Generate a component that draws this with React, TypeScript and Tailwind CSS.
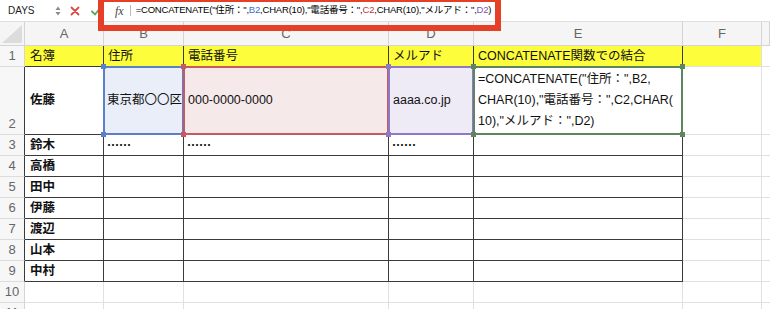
import React from "react";

const cols = ["A", "B", "C", "D", "E", "F", ""];
const names = ["鈴木", "高橋", "田中", "伊藤", "渡辺", "山本", "中村"];
const dark = "border-[#3a3a3a]";
const light = "border-[#e0e0e0]";

function Sel({ color, fill }: { color: string; fill?: string }) {
  return (
    <div className={`absolute -left-px -top-px -right-px -bottom-px border-2 ${color}`}>
      <span className={`absolute -left-[4px] -top-[4px] w-[5px] h-[5px] ${fill}`} />
      <span className={`absolute -right-[4px] -top-[4px] w-[5px] h-[5px] ${fill}`} />
      <span className={`absolute -left-[4px] -bottom-[4px] w-[5px] h-[5px] ${fill}`} />
      <span className={`absolute -right-[4px] -bottom-[4px] w-[5px] h-[5px] ${fill}`} />
    </div>
  );
}

function RowNum({ n, edge, bottom }: { n: number; edge?: boolean; bottom?: boolean }) {
  return (
    <div
      className={`bg-[#f7f7f7] border-b border-[#dcdcdc] border-r ${edge ? "border-r-[#3a3a3a]" : "border-r-[#d4d4d4]"} flex justify-center text-[13px] text-[#666] ${bottom ? "items-end pb-[1px]" : "items-center"}`}
    >
      {n}
    </div>
  );
}

export default function App() {
  return (
    <div className="w-[770px] h-[309px] overflow-hidden bg-white relative font-['Liberation_Sans','Noto_Sans_CJK_JP',sans-serif] text-[#111]">
      {/* toolbar + formula bar */}
      <div className="h-[22px] flex items-center bg-white border-b border-[#dedede]">
        <div className="ml-[4px] w-[58px] h-[17px] flex items-center justify-between pl-[4px] pr-[1px] bg-white">
          <span className="text-[10px] text-[#222]">DAYS</span>
          <svg width="6" height="10" viewBox="0 0 6 10">
            <polygon points="3,0.5 5.5,4 0.5,4" fill="#8a8a8a" />
            <polygon points="0.5,6 5.5,6 3,9.5" fill="#8a8a8a" />
          </svg>
        </div>
        <svg className="ml-[8px]" width="10" height="10" viewBox="0 0 10 10">
          <path d="M1.5 1.5 L8.5 8.5 M8.5 1.5 L1.5 8.5" stroke="#d84a43" strokeWidth="1.8" strokeLinecap="round" />
        </svg>
        <svg className="ml-[11px]" width="10" height="10" viewBox="0 0 10 10">
          <path d="M1 5.5 L4 8.5 L9.5 1.5" stroke="#5aa65c" strokeWidth="1.8" fill="none" strokeLinecap="round" />
        </svg>
        <div className="ml-[14px] flex items-center h-full">
          <span className="font-['Liberation_Serif',serif] italic text-[12px] text-[#444]">fx</span>
          <span className="ml-[6px] w-px h-[11px] bg-[#bbb]" />
          <span className="ml-[5px] text-[9.5px] text-[#000] whitespace-nowrap tracking-[-0.2px]">
            =CONCATENATE("住所：",<span className="text-[#3b6fc4]">B2</span>,CHAR(10),"電話番号：",
            <span className="text-[#c8333f]">C2</span>,CHAR(10),"メルアド：",<span className="text-[#7d55b8]">D2</span>)
          </span>
        </div>
      </div>

      {/* red annotation frame */}
      <div className="absolute left-[98px] top-[-4px] w-[403px] h-[35px] border-[6px] border-[#e63f28] pointer-events-none z-10" />

      {/* sheet */}
      <div className="grid grid-cols-[25px_79px_80px_205px_85px_209px_79px_1fr] grid-rows-[24px_21px_68px_repeat(9,21px)] text-[12.5px]">
        {/* column headers */}
        <div className="bg-[#f5f5f5] border-r border-b border-[#d4d4d4] relative">
          <svg className="absolute right-[2px] bottom-[2px]" width="20" height="18" viewBox="0 0 20 18">
            <polygon points="20,0 20,18 0,18" fill="#dcdcdc" />
          </svg>
        </div>
        {cols.map((c, i) => (
          <div
            key={i}
            className="bg-[#f5f5f5] border-r border-b border-[#d4d4d4] flex items-center justify-center text-[13px] text-[#666]"
          >
            {c}
          </div>
        ))}

        {/* row 1 */}
        <RowNum n={1} />
        <div className={`bg-[#fdfd3c] border-r border-b ${dark} flex items-center pl-[5px]`}>名簿</div>
        <div className={`bg-[#fdfd3c] border-r border-b ${dark} flex items-center pl-[4px]`}>住所</div>
        <div className={`bg-[#fdfd3c] border-r border-b ${dark} flex items-center pl-[4px]`}>電話番号</div>
        <div className={`bg-[#fdfd3c] border-r border-b ${dark} flex items-center pl-[4px]`}>メルアド</div>
        <div className={`bg-[#fdfd3c] border-r border-b ${dark} flex items-center pl-[4px]`}>CONCATENATE関数での結合</div>
        <div className={`bg-[#fdfd3c] border-r border-b ${light}`} />
        <div className={`border-b ${light}`} />

        {/* row 2 */}
        <RowNum n={2} edge bottom />
        <div className={`border-r border-b ${dark} flex items-center pl-[5px] font-bold`}>佐藤</div>
        <div className={`relative bg-[#e9eef8] border-r border-b ${dark} flex items-center pl-[3px] whitespace-nowrap`}>
          東京都〇〇区
          <Sel color="border-[#5a80c8]" fill="bg-[#5a80c8]" />
        </div>
        <div className={`relative bg-[#f6e9ea] border-r border-b ${dark} flex items-center pl-[4px]`}>
          000-0000-0000
          <Sel color="border-[#c55a63]" fill="bg-[#c55a63]" />
        </div>
        <div className={`relative bg-[#efebf6] border-r border-b ${dark} flex items-center pl-[4px]`}>
          aaaa.co.jp
          <Sel color="border-[#9079c4]" fill="bg-[#9079c4]" />
        </div>
        <div className={`relative border-r border-b ${dark} flex items-center pl-[4px] leading-[21px] whitespace-nowrap`}>
          <div>
            =CONCATENATE("住所：",B2,
            <br />
            CHAR(10),"電話番号：",C2,CHAR(
            <br />
            10),"メルアド：",D2)
          </div>
          <Sel color="border-[#5d8660]" fill="bg-[#5d8660]" />
        </div>
        <div className={`border-r border-b ${light}`} />
        <div className={`border-b ${light}`} />

        {/* rows 3-9 */}
        {names.map((n, i) => (
          <React.Fragment key={n}>
            <RowNum n={i + 3} edge />
            <div className={`border-r border-b ${dark} flex items-center pl-[5px] font-bold`}>{n}</div>
            <div className={`border-r border-b ${dark} flex items-center pl-[3px] text-[12px] text-black font-bold font-['Noto_Sans_CJK_JP',sans-serif]`}>
              {i === 0 ? "……" : ""}
            </div>
            <div className={`border-r border-b ${dark} flex items-center pl-[3px] text-[12px] text-black font-bold font-['Noto_Sans_CJK_JP',sans-serif]`}>
              {i === 0 ? "……" : ""}
            </div>
            <div className={`border-r border-b ${dark} flex items-center pl-[3px] text-[12px] text-black font-bold font-['Noto_Sans_CJK_JP',sans-serif]`}>
              {i === 0 ? "……" : ""}
            </div>
            <div className={`border-r border-b ${dark}`} />
            <div className={`border-r border-b ${light}`} />
            <div className={`border-b ${light}`} />
          </React.Fragment>
        ))}

        {/* rows 10-11 */}
        {[10, 11].map((r) => (
          <React.Fragment key={r}>
            <RowNum n={r} />
            <div className={`border-r border-b ${light}`} />
            <div className={`border-r border-b ${light}`} />
            <div className={`border-r border-b ${light}`} />
            <div className={`border-r border-b ${light}`} />
            <div className={`border-r border-b ${light}`} />
            <div className={`border-r border-b ${light}`} />
            <div className={`border-b ${light}`} />
          </React.Fragment>
        ))}
      </div>
    </div>
  );
}
